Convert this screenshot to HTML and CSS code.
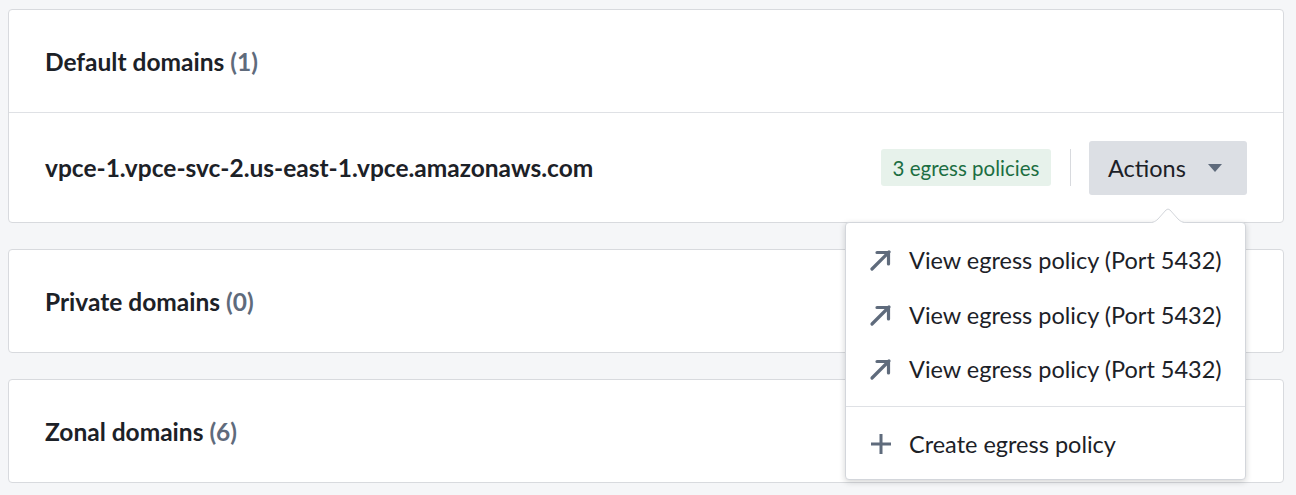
FILE: index.html
```html
<!DOCTYPE html>
<html>
<head>
<meta charset="utf-8">
<link rel="stylesheet" href="styles.css">
</head>
<body>
<div class="page">
  <section class="card">
    <div class="card-head"><span class="title">Default domains <span class="count">(1)</span></span></div>
    <div class="card-row">
      <span class="domain">vpce-1.vpce-svc-2.us-east-1.vpce.amazonaws.com</span>
      <div class="row-actions">
        <span class="badge">3 egress policies</span>
        <span class="vsep"></span>
        <button class="actions-btn">Actions <svg class="caret" width="14" height="8" viewBox="0 0 14 8"><path d="M0 0h14L7 8z" fill="#5f6b7c"/></svg></button>
      </div>
    </div>
  </section>
  <section class="card">
    <div class="card-head"><span class="title">Private domains <span class="count">(0)</span></span></div>
  </section>
  <section class="card">
    <div class="card-head"><span class="title">Zonal domains <span class="count">(6)</span></span></div>
  </section>
</div>

<div class="popover">
  <svg class="pop-arrow" width="44" height="20" viewBox="0 0 44 20"><path d="M0 19 C6 19 9 18 12 15 L20 6 Q22 4 24 6 L32 15 C35 18 38 19 44 19" fill="#fff" stroke="#d3d6db" stroke-width="1"/><rect x="0" y="19" width="44" height="2" fill="#fff"/></svg>
  <ul class="menu">
    <li class="item"><svg class="ico" width="24" height="24" viewBox="0 0 24 24"><path d="M3 21L20 4M8 4.5h11.5v11.5" fill="none" stroke="#5f6b7c" stroke-width="3.2" stroke-linecap="round" stroke-linejoin="round"/></svg><span>View egress policy (Port 5432)</span></li>
    <li class="item"><svg class="ico" width="24" height="24" viewBox="0 0 24 24"><path d="M3 21L20 4M8 4.5h11.5v11.5" fill="none" stroke="#5f6b7c" stroke-width="3.2" stroke-linecap="round" stroke-linejoin="round"/></svg><span>View egress policy (Port 5432)</span></li>
    <li class="item"><svg class="ico" width="24" height="24" viewBox="0 0 24 24"><path d="M3 21L20 4M8 4.5h11.5v11.5" fill="none" stroke="#5f6b7c" stroke-width="3.2" stroke-linecap="round" stroke-linejoin="round"/></svg><span>View egress policy (Port 5432)</span></li>
    <li class="divider"></li>
    <li class="item"><svg class="ico" width="24" height="24" viewBox="0 0 24 24"><path d="M12 2v20M2 12h20" fill="none" stroke="#5f6b7c" stroke-width="3"/></svg><span>Create egress policy</span></li>
  </ul>
</div>
</body>
</html>
```
FILE: styles.css
```css
* { box-sizing: border-box; }
html, body { margin: 0; }
body {
  background: #f5f6f8;
  font-family: "Lato", "Open Sans", sans-serif;
  color: #1c2127;
  width: 1296px;
  height: 495px;
  overflow: hidden;
  position: relative;
}
.page {
  padding: 9px 12px 0 8px;
  display: flex;
  flex-direction: column;
  gap: 26px;
}
.card {
  background: #fff;
  border: 1px solid #d8dade;
  border-radius: 4px;
}
.card-head {
  height: 102px;
  padding-left: 36px;
  display: flex;
  align-items: center;
  font-size: 24.5px;
  font-weight: 700;
}
.card-head .count { color: #5f6b7c; }
.card-row {
  height: 110px;
  border-top: 1px solid #dfe1e5;
  padding: 0 36px;
  display: flex;
  align-items: center;
  justify-content: space-between;
}
.domain { font-size: 24.5px; font-weight: 700; }
.row-actions { display: flex; align-items: center; }
.badge {
  background: #e7f2eb;
  color: #1c6e42;
  font-size: 20.5px;
  height: 37px;
  width: 170px;
  display: flex;
  align-items: center;
  justify-content: center;
  border-radius: 3px;
}
.vsep {
  width: 1px;
  height: 37px;
  background: #d8dade;
  margin: 0 18px 0 19px;
}
.actions-btn {
  background: #dcdfe4;
  border: none;
  border-radius: 3px;
  height: 54px;
  width: 158px;
  font-family: inherit;
  font-size: 23.5px;
  color: #1c2127;
  display: flex;
  align-items: center;
  padding: 0 0 0 19px;
}
.caret { margin-left: 22px; }
.popover {
  position: absolute;
  left: 845px;
  top: 222px;
  width: 401px;
  height: 258px;
  background: #fff;
  border-radius: 4px;
  border: 1px solid #d3d6db;
  box-shadow: 0 2px 6px rgba(17, 20, 24, 0.18);
}
.pop-arrow {
  position: absolute;
  left: 300px;
  top: -19px;
}
.menu {
  list-style: none;
  margin: 0;
  padding: 10px 0 8px;
}
.item {
  height: 54.5px;
  display: flex;
  align-items: center;
  padding-left: 23px;
  font-size: 23.5px;
  color: #1c2127;
}
.ico { margin-right: 16px; flex: none; }
.divider {
  height: 1px;
  background: #dfe1e5;
  margin: 9px 0 10px;
}
```
